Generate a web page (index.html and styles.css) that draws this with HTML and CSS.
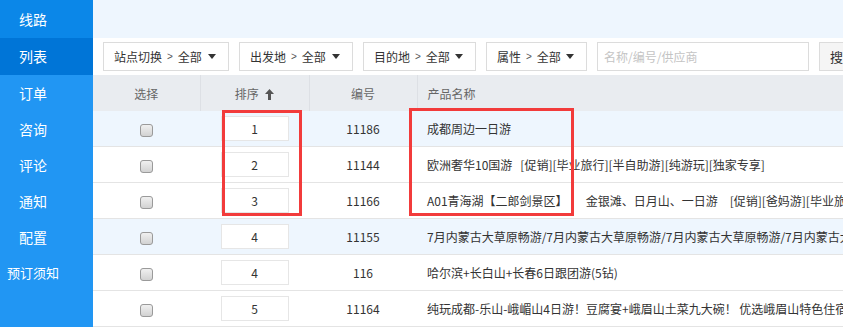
FILE: index.html
```html
<!DOCTYPE html>
<html lang="zh-CN">
<head>
  <meta charset="UTF-8" />
  <title>线路列表</title>
  <link rel="stylesheet" href="styles.css">
</head>
<body>
  <div class="layout">
    <div class="sidebar">
      <div class="nav-item nav-head">线路</div>
      <div class="nav-item active">列表</div>
      <div class="nav-item">订单</div>
      <div class="nav-item">咨询</div>
      <div class="nav-item">评论</div>
      <div class="nav-item">通知</div>
      <div class="nav-item">配置</div>
      <div class="nav-item nav-long">预订须知</div>
    </div>

    <div class="main">
      <div class="topbar"></div>

      <div class="filters">
        <div class="select w-site">站点切换<span class="gt">&gt;</span>全部<span class="caret"></span></div>
        <div class="select w-from">出发地<span class="gt">&gt;</span>全部<span class="caret"></span></div>
        <div class="select w-to">目的地<span class="gt">&gt;</span>全部<span class="caret"></span></div>
        <div class="select w-attr">属性<span class="gt">&gt;</span>全部<span class="caret"></span></div>
        <input class="search-input" type="text" placeholder="名称/编号/供应商" />
        <button class="search-btn">搜索</button>
      </div>

      <table class="list">
        <colgroup>
          <col class="c-check"><col class="c-sort"><col class="c-id"><col>
        </colgroup>
        <thead>
          <tr>
            <th>选择</th>
            <th>排序 <svg class="sort-icon" width="9" height="11" viewBox="0 0 9 11"><path d="M4.5 0 L9 5 H6 V11 H3 V5 H0 Z" fill="#555"/></svg></th>
            <th>编号</th>
            <th class="name">产品名称</th>
          </tr>
        </thead>
        <tbody>
          <tr class="hl">
            <td><input type="checkbox" class="chk"></td>
            <td><input class="sort-input" type="text" value="1"></td>
            <td>11186</td>
            <td class="name">成都周边一日游</td>
          </tr>
          <tr>
            <td><input type="checkbox" class="chk"></td>
            <td><input class="sort-input" type="text" value="2"></td>
            <td>11144</td>
            <td class="name">欧洲奢华10国游<span class="tags">[促销][毕业旅行][半自助游][纯游玩][独家专享]</span></td>
          </tr>
          <tr>
            <td><input type="checkbox" class="chk"></td>
            <td><input class="sort-input" type="text" value="3"></td>
            <td>11166</td>
            <td class="name">A01青海湖【二郎剑景区】<span class="sub">金银滩、日月山、一日游</span><span class="tags">[促销][爸妈游][毕业旅行][半自助游]</span></td>
          </tr>
          <tr class="hl">
            <td><input type="checkbox" class="chk"></td>
            <td><input class="sort-input" type="text" value="4"></td>
            <td>11155</td>
            <td class="name">7月内蒙古大草原畅游/7月内蒙古大草原畅游/7月内蒙古大草原畅游/7月内蒙古大草原畅游</td>
          </tr>
          <tr>
            <td><input type="checkbox" class="chk"></td>
            <td><input class="sort-input" type="text" value="4"></td>
            <td>116</td>
            <td class="name">哈尔滨+长白山+长春6日跟团游(5钻)</td>
          </tr>
          <tr>
            <td><input type="checkbox" class="chk"></td>
            <td><input class="sort-input" type="text" value="5"></td>
            <td>11164</td>
            <td class="name">纯玩成都-乐山-峨嵋山4日游！豆腐宴+峨眉山土菜九大碗！ 优选峨眉山特色住宿</td>
          </tr>
        </tbody>
      </table>
    </div>
  </div>

  <!-- annotation boxes -->
  <div class="mark mark-sort"></div>
  <div class="mark mark-name"></div>
</body>
</html>
```

FILE: styles.css
```css
body {
  margin: 0;
  font-family: "Noto Sans CJK SC", "Liberation Sans", sans-serif;
  font-size: 12px;
  color: #333;
  overflow: hidden;
}
.layout {
  display: flex;
  height: 327px;
}
.sidebar {
  width: 93px;
  flex-shrink: 0;
  background-color: #2196f3;
}
.nav-item {
  width: 66px;
  height: 36px;
  line-height: 36px;
  text-align: center;
  color: #fff;
  font-size: 14px;
}
.nav-long {
  font-size: 13px;
}
.nav-head {
  width: auto;
  padding-right: 27px;
  height: 38px;
  line-height: 38px;
  background-color: #0b87e8;
}
.active {
  width: auto;
  padding-right: 27px;
  height: 37px;
  line-height: 37px;
  background-color: #0075d7;
}
.main {
  flex: 1;
  min-width: 0;
  overflow: hidden;
}
.topbar {
  height: 38px;
  background-color: #eef6fe;
}
.filters {
  height: 37px;
  display: flex;
  align-items: flex-start;
  gap: 10px;
  padding: 4px 10px 0;
  box-sizing: border-box;
  white-space: nowrap;
}
.select {
  height: 29px;
  line-height: 27px;
  box-sizing: border-box;
  border: 1px solid #dcdcdc;
  padding: 0 12px 0 10px;
  display: flex;
  align-items: center;
  flex-shrink: 0;
}
.w-site { width: 126px; }
.w-from { width: 114px; }
.w-to { width: 113px; }
.w-attr { width: 101px; }
.gt {
  font-family: "Liberation Sans", sans-serif;
  font-size: 10px;
  color: #555;
  margin: 0 5px;
}
.caret {
  margin-left: auto;
  width: 0;
  height: 0;
  border-left: 4px solid transparent;
  border-right: 4px solid transparent;
  border-top: 5px solid #333;
}
.search-input {
  width: 212px;
  height: 29px;
  box-sizing: border-box;
  border: 1px solid #dcdcdc;
  padding: 0 6px;
  font-family: inherit;
  font-size: 12px;
  flex-shrink: 0;
}
.search-input::placeholder {
  color: #c4c4c4;
}
.search-btn {
  width: 60px;
  height: 29px;
  flex-shrink: 0;
  border: 1px solid #dcdcdc;
  background-color: #f5f5f5;
  font-family: inherit;
  font-size: 13px;
  color: #333;
  text-align: left;
  padding-left: 10px;
}
.list {
  width: 1100px;
  table-layout: fixed;
  border-collapse: collapse;
}
.c-check { width: 107px; }
.c-sort { width: 109px; }
.c-id { width: 108px; }
.list th {
  height: 36px;
  padding: 0;
  background-color: #e9ecf0;
  color: #666;
  font-weight: normal;
  text-align: center;
  border-left: 1px solid #dde0e5;
}
.list th:first-child {
  border-left: none;
}
.list td {
  height: 35px;
  padding: 0;
  text-align: center;
  border-bottom: 1px solid #e4e4e4;
  white-space: nowrap;
  overflow: hidden;
}
.list .name {
  text-align: left;
  padding-left: 10px;
}
.list tr.hl td {
  background-color: #eef6fe;
}
.tags {
  margin-left: 8px;
}
.sub {
  margin-left: 18px;
}
.sub + .tags {
  margin-left: 12px;
}
.sort-icon {
  vertical-align: -1px;
  margin-left: 4px;
}
.chk {
  appearance: none;
  -webkit-appearance: none;
  width: 13px;
  height: 13px;
  margin: 0;
  vertical-align: middle;
  border: 1px solid #9a9a9a;
  border-radius: 3px;
  background: linear-gradient(#f0f0f0, #d2d2d2);
}
.sort-input {
  width: 68px;
  height: 25px;
  box-sizing: border-box;
  border: 1px solid #e6e6e6;
  background-color: #fff;
  text-align: center;
  font-family: inherit;
  font-size: 12px;
  color: #333;
  vertical-align: middle;
}
.mark {
  position: absolute;
  border: 3px solid #f23b3b;
  box-sizing: border-box;
}
.mark-sort {
  left: 222px;
  top: 110px;
  width: 80px;
  height: 106px;
}
.mark-name {
  left: 409px;
  top: 108px;
  width: 165px;
  height: 108px;
}
```
